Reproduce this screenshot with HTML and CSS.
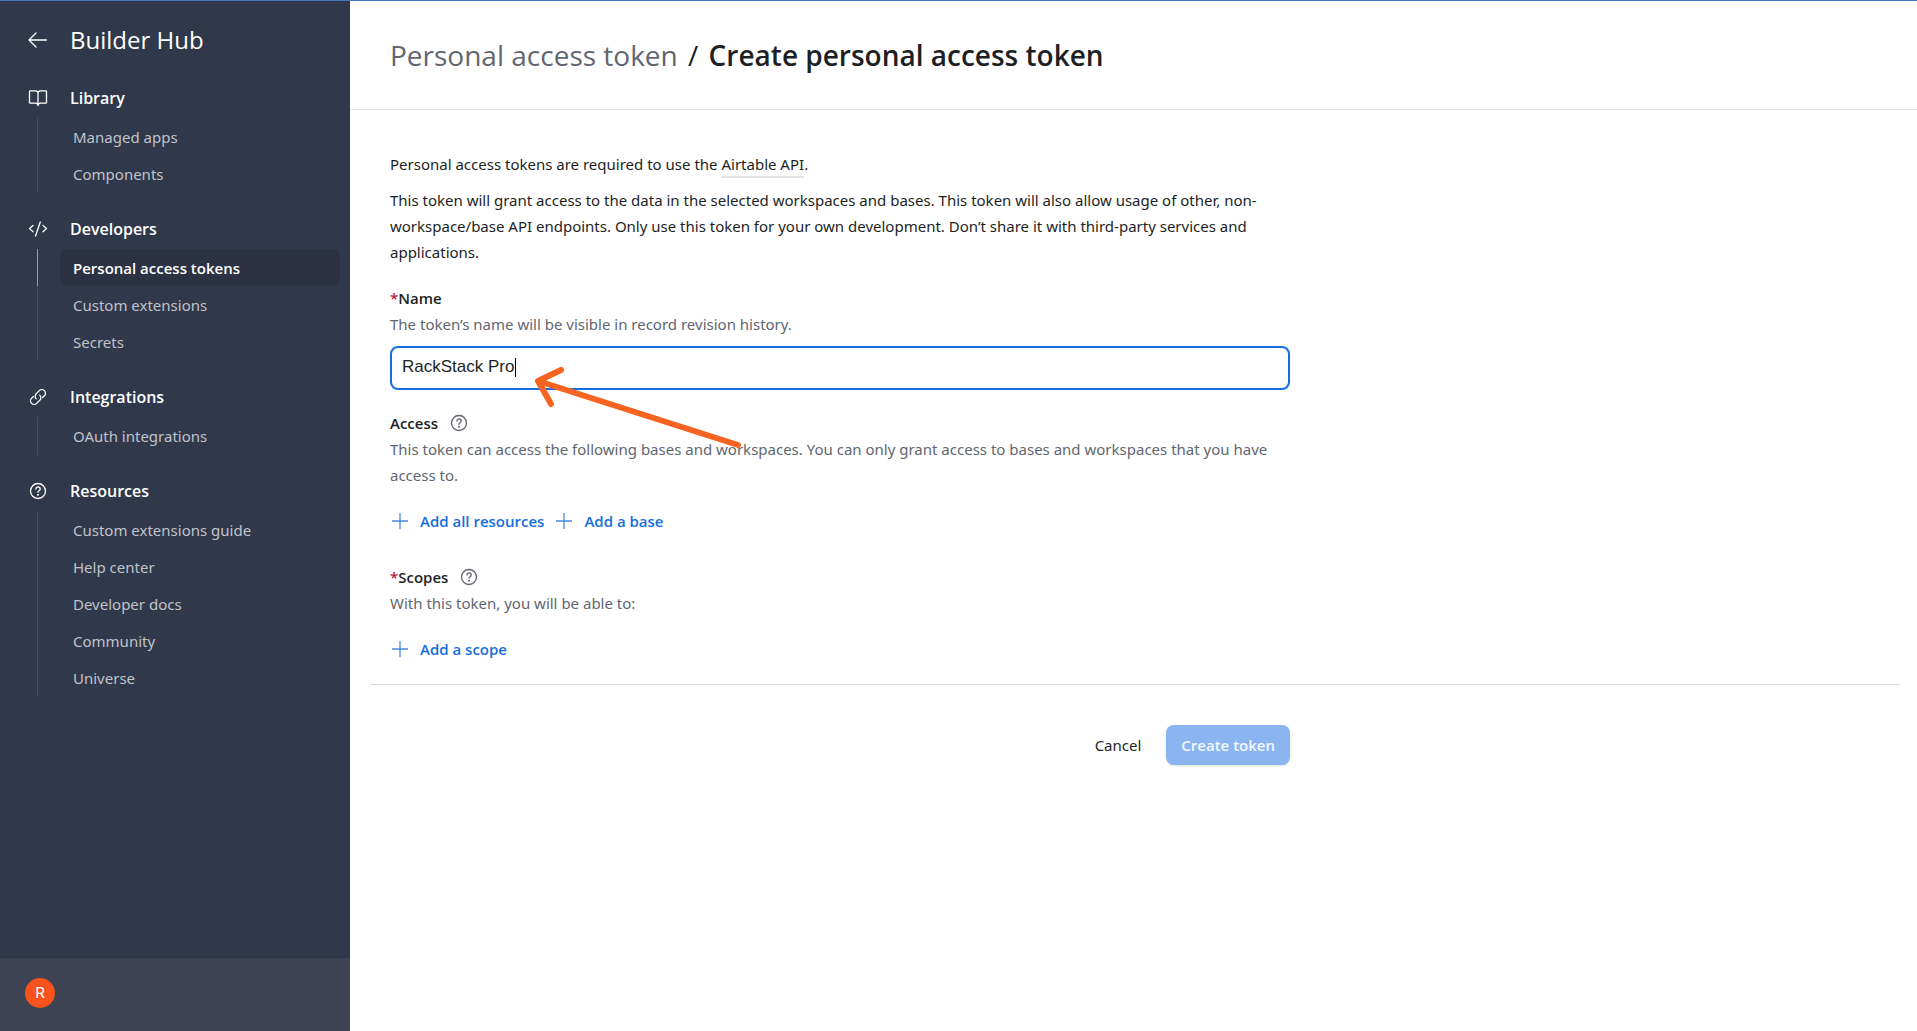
FILE: index.html
```html
<!DOCTYPE html>
<html lang="en">
<head>
<meta charset="utf-8">
<meta name="viewport" content="width=device-width, initial-scale=1">
<title>Create personal access token</title>
<link rel="stylesheet" href="styles.css">
</head>
<body>
<div class="app">
  <aside class="sidebar">
    <div class="sidebar-title">
      <a class="icon-slot" href="#" aria-label="Back">
        <svg width="20" height="16" viewBox="0 0 20 16"><path d="M18.500 8H1.500M8 1L1 8l7 7"/></svg>
      </a>
      <span>Builder Hub</span>
    </div>
    <nav class="nav">
      <section class="nav-group">
        <h2 class="nav-heading">
          <span class="icon-slot"><svg width="20" height="18" viewBox="0 0 20 18"><path d="M10 4C10 2.500 9 1.800 7.500 1.800H2.300Q1.500 1.800 1.500 2.600V13.400Q1.500 14.200 2.300 14.200H7.500C9 14.200 10 15 10 16.500C10 15 11 14.200 12.500 14.200H17.700Q18.500 14.200 18.500 13.400V2.600Q18.500 1.800 17.700 1.800H12.500C11 1.800 10 2.500 10 4V16"/></svg></span>
          Library
        </h2>
        <ul class="nav-list">
          <li><a href="#">Managed apps</a></li>
          <li><a href="#">Components</a></li>
        </ul>
      </section>
      <section class="nav-group">
        <h2 class="nav-heading">
          <span class="icon-slot"><svg width="20" height="18" viewBox="0 0 20 18"><path d="M5 5.500L1.500 8.600L5 11.800M15 5.500L18.500 8.600L15 11.800M12.300 2L7.500 16"/></svg></span>
          Developers
        </h2>
        <ul class="nav-list">
          <li class="current"><a href="#" aria-current="page">Personal access tokens</a></li>
          <li><a href="#">Custom extensions</a></li>
          <li><a href="#">Secrets</a></li>
        </ul>
      </section>
      <section class="nav-group">
        <h2 class="nav-heading">
          <span class="icon-slot"><svg width="18" height="18" viewBox="0 0 18 18"><path d="M7.200 10.800A3.600 3.600 0 0 1 7.200 5.700L10.300 2.600A3.600 3.600 0 0 1 15.400 7.700L13.600 9.500M10.800 7.200A3.600 3.600 0 0 1 10.800 12.300L7.700 15.400A3.600 3.600 0 0 1 2.600 10.300L4.400 8.500"/></svg></span>
          Integrations
        </h2>
        <ul class="nav-list">
          <li><a href="#">OAuth integrations</a></li>
        </ul>
      </section>
      <section class="nav-group">
        <h2 class="nav-heading">
          <span class="icon-slot"><svg width="18" height="18" viewBox="0 0 18 18"><circle cx="9" cy="9" r="7.500"/><path d="M6.900 7.100C6.900 4.200 11.200 4.300 11.200 7.100C11.200 8.800 9 8.600 9 10.300"/><circle class="dot" cx="9" cy="12.700" r="1"/></svg></span>
          Resources
        </h2>
        <ul class="nav-list">
          <li><a href="#">Custom extensions guide</a></li>
          <li><a href="#">Help center</a></li>
          <li><a href="#">Developer docs</a></li>
          <li><a href="#">Community</a></li>
          <li><a href="#">Universe</a></li>
        </ul>
      </section>
    </nav>
    <div class="account"><button class="avatar" type="button" aria-label="Account">R</button></div>
  </aside>

  <main class="main">
    <header class="page-header">
      <h1><a href="#">Personal access token</a> <span class="slash">/</span> <strong>Create personal access token</strong></h1>
    </header>
    <form class="form">
      <div class="fields">
        <p class="intro">Personal access tokens are required to use the <a href="#">Airtable API</a>.</p>
        <p class="notice">This token will grant access to the data in the selected workspaces and bases. This token will also allow usage of other, non-workspace/base API endpoints. Only use this token for your own development. Don’t share it with third-party services and applications.</p>

        <div class="field">
          <label class="label" for="name"><span class="required">*</span>Name</label>
          <p class="hint">The token’s name will be visible in record revision history.</p>
          <div class="name-box">
            <input id="name" type="text" value="RackStack Pro">
            <span class="caret"></span>
            <svg class="arrow" width="220" height="90" viewBox="0 0 220 90"><path d="M208 79L8 15M31 4L8 15L21 38"/></svg>
          </div>
        </div>

        <div class="field">
          <h2 class="label">Access
            <svg class="help" width="18" height="18" viewBox="0 0 18 18"><circle cx="9" cy="9" r="7.500"/><path d="M6.900 7.100C6.900 4.200 11.200 4.300 11.200 7.100C11.200 8.800 9 8.600 9 10.300"/><circle class="dot" cx="9" cy="12.700" r="1"/></svg>
          </h2>
          <p class="hint">This token can access the following bases and workspaces. You can only grant access to bases and workspaces that you have access to.</p>
          <div class="adders">
            <button class="add" type="button"><svg width="16" height="16" viewBox="0 0 16 16"><path d="M8 0V16M0 8H16"/></svg>Add all resources</button>
            <button class="add" type="button"><svg width="16" height="16" viewBox="0 0 16 16"><path d="M8 0V16M0 8H16"/></svg>Add a base</button>
          </div>
        </div>

        <div class="field">
          <h2 class="label"><span><span class="required">*</span>Scopes</span>
            <svg class="help" width="18" height="18" viewBox="0 0 18 18"><circle cx="9" cy="9" r="7.500"/><path d="M6.900 7.100C6.900 4.200 11.200 4.300 11.200 7.100C11.200 8.800 9 8.600 9 10.300"/><circle class="dot" cx="9" cy="12.700" r="1"/></svg>
          </h2>
          <p class="hint">With this token, you will be able to:</p>
          <div class="adders">
            <button class="add" type="button"><svg width="16" height="16" viewBox="0 0 16 16"><path d="M8 0V16M0 8H16"/></svg>Add a scope</button>
          </div>
        </div>
      </div>
      <hr class="divider">
      <div class="actions">
        <button class="cancel" type="button">Cancel</button>
        <button class="create" type="submit" disabled>Create token</button>
      </div>
    </form>
  </main>
</div>
</body>
</html>
```

FILE: styles.css
```css
* { box-sizing: border-box; }

body {
  margin: 0;
  font-family: "Segoe UI", "Noto Sans", "Open Sans", sans-serif;
  font-size: 15px;
  line-height: 26px;
  color: #1d1f25;
  background: #fff;
}

h1, h2, p, ul { margin: 0; padding: 0; }
ul { list-style: none; }
a { color: inherit; text-decoration: none; }
button { border: 0; padding: 0; background: none; font: inherit; color: inherit; }
svg { display: block; fill: none; stroke: currentColor; stroke-width: 1.3; stroke-linecap: round; stroke-linejoin: round; }
.dot { fill: currentColor; stroke: none; }

.app {
  display: flex;
  min-height: 100vh;
  border-top: 1px solid #4a7ab5;
}

/* Sidebar */
.sidebar {
  flex: none;
  width: 350px;
  display: flex;
  flex-direction: column;
  background: #30384b;
  color: #fff;
}
.icon-slot {
  flex: none;
  width: 70px;
  display: flex;
  justify-content: center;
  padding-left: 6px;
}
.sidebar-title {
  display: flex;
  align-items: center;
  height: 77px;
  font-family: "Segoe UI", "Open Sans", "Noto Sans", sans-serif;
  font-size: 24px;
}
.nav-heading {
  display: flex;
  align-items: center;
  height: 40px;
  font-family: "Segoe UI", "Open Sans", "Noto Sans", sans-serif;
  font-size: 16px;
  font-weight: 600;
}
.nav { flex: 1; }
.nav-group { padding-bottom: 16px; }
.nav-list {
  margin-left: 37px;
  padding-right: 10px;
  padding-bottom: 1px;
  box-shadow: inset 1px 0 #464d5f;
}
.nav-list li { padding-left: 23px; }
.nav-list a {
  display: block;
  height: 37px;
  padding-left: 13px;
  line-height: 39px;
  color: #c0c3c9;
}
.nav-list .current { box-shadow: inset 1px 0 #989ca5; }
.nav-list .current a {
  border-radius: 8px;
  background: #2c3243;
  color: #fff;
  font-family: "Segoe UI", "Open Sans", "Noto Sans", sans-serif;
  font-weight: 600;
}
.account {
  height: 74px;
  padding: 20px 25px;
  border-top: 1px solid #2b3446;
  background: #3e4354;
}
.avatar {
  display: block;
  width: 30px;
  height: 30px;
  border-radius: 50%;
  background: #f8531f;
  color: #fff;
  font-family: Inter, sans-serif;
}

/* Page */
.main { flex: 1; min-width: 0; }
.page-header {
  padding: 36px 40px;
  border-bottom: 1px solid #e5e6e8;
}
.page-header h1 {
  font-family: "Segoe UI", "Open Sans", "Noto Sans", sans-serif;
  font-size: 28px;
  font-weight: 400;
  line-height: 36px;
}
.page-header a { color: #616670; }
.page-header strong { font-weight: 600; }
.slash { margin: 0 3px; }
.form { padding: 41px 17px 40px 20px; }
.fields, .actions { max-width: 940px; padding: 0 20px; }
.intro { margin-bottom: 10px; }
.intro a { padding-bottom: 2px; border-bottom: 2px solid #e2e3e5; }
.notice { margin-bottom: 20px; }
.field { margin-bottom: 20px; }
.field:last-child { margin-bottom: 12px; }
.label {
  display: flex;
  align-items: center;
  gap: 12px;
  font-family: "Segoe UI", "Open Sans", "Noto Sans", sans-serif;
  font-size: 15px;
  font-weight: 600;
}
.label[for] { gap: 0; }
.required { color: #b9154a; }
.help { color: #5f636b; }
.hint { color: #616670; }
.name-box { position: relative; margin-top: 9px; }
.name-box input {
  display: block;
  width: 100%;
  height: 44px;
  padding: 0 10px 2px;
  border: 2px solid #166ee1;
  border-radius: 8px;
  outline: 0;
  background: #fff;
  font-family: "Liberation Sans", Arial, sans-serif;
  font-size: 17px;
  color: #1d1f25;
}
.caret {
  position: absolute;
  top: 12px;
  left: 125px;
  width: 1px;
  height: 19px;
  background: #000;
}
.arrow {
  position: absolute;
  top: 20px;
  left: 140px;
  color: #f76422;
  stroke-width: 6;
  pointer-events: none;
}
.adders {
  display: flex;
  gap: 12px;
  padding: 20px 2px 10px;
}
.add {
  display: flex;
  align-items: center;
  gap: 12px;
  height: 26px;
  color: #166ee1;
  font-family: "Segoe UI", "Open Sans", "Noto Sans", sans-serif;
  font-weight: 600;
}
.add svg { opacity: .8; }
.divider {
  height: 1px;
  margin: 0 0 40px;
  border: 0;
  background: #dadbdd;
}
.actions {
  display: flex;
  justify-content: flex-end;
  align-items: center;
  gap: 25px;
}
.create {
  height: 40px;
  padding: 0 15px;
  border-radius: 8px;
  background: #8ab5f0;
  color: #f3f8ff;
  font-family: "Segoe UI", "Open Sans", "Noto Sans", sans-serif;
  font-weight: 600;
  box-shadow: 0 1px 2px #0002;
}
```
